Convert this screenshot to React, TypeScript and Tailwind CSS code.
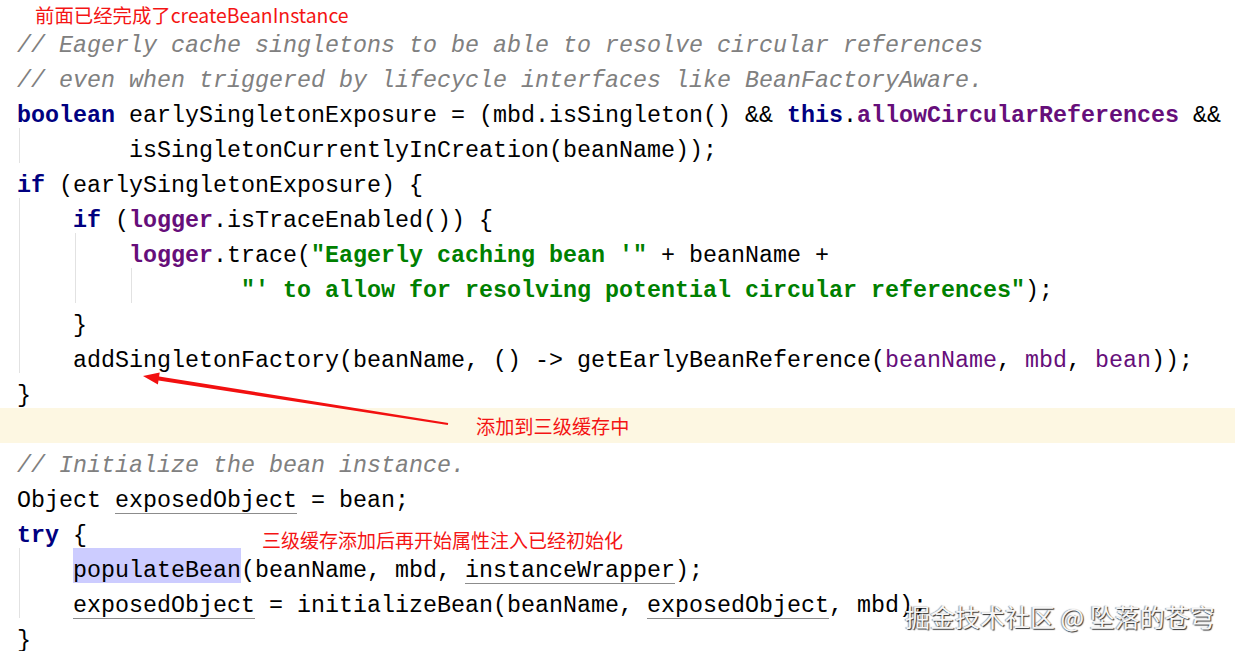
import React from "react";

type Seg = [string, string?];

interface Line {
  segs: Seg[];
  guides?: number[];
  band?: boolean;
}

// token styles, IntelliJ default light scheme
const K = "font-bold text-[#000080]";
const F = "font-bold text-[#660e7a]";
const P = "text-[#660e7a]";
const S = "font-bold text-[#008000]";
const C = "italic text-[#808080]";
const U = "underline decoration-[#8c8c8c] decoration-1 underline-offset-[6px]";

const guideClass: Record<number, string> = {
  20: "left-[19px]",
  75: "left-[75px]",
  131: "left-[131px]",
};

const lines: Line[] = [
  { segs: [["// Eagerly cache singletons to be able to resolve circular references", C]] },
  { segs: [["// even when triggered by lifecycle interfaces like BeanFactoryAware.", C]] },
  {
    segs: [
      ["boolean", K],
      [" earlySingletonExposure = (mbd.isSingleton() && "],
      ["this", K],
      ["."],
      ["allowCircularReferences", F],
      [" &&"],
    ],
  },
  { segs: [["        isSingletonCurrentlyInCreation(beanName));"]], guides: [20] },
  { segs: [["if", K], [" (earlySingletonExposure) {"]] },
  { segs: [["    "], ["if", K], [" ("], ["logger", F], [".isTraceEnabled()) {"]], guides: [20] },
  {
    segs: [["        "], ["logger", F], [".trace("], ['"Eagerly caching bean \'"', S], [" + beanName +"]],
    guides: [20, 75],
  },
  {
    segs: [["                "], ["\"' to allow for resolving potential circular references\"", S], [");"]],
    guides: [20, 75, 131],
  },
  { segs: [["    }"]], guides: [20] },
  {
    segs: [
      ["    addSingletonFactory(beanName, () -> getEarlyBeanReference("],
      ["beanName", P],
      [", "],
      ["mbd", P],
      [", "],
      ["bean", P],
      ["));"],
    ],
    guides: [20],
  },
  { segs: [["}"]] },
  { segs: [], band: true },
  { segs: [["// Initialize the bean instance.", C]] },
  { segs: [["Object "], ["exposedObject", U], [" = bean;"]] },
  { segs: [["try", K], [" {"]] },
  {
    segs: [["    "], ["populateBean", "hl"], ["(beanName, mbd, "], ["instanceWrapper", U], [");"]],
    guides: [20],
  },
  {
    segs: [
      ["    "],
      ["exposedObject", U],
      [" = initializeBean(beanName, "],
      ["exposedObject", U],
      [", mbd);"],
    ],
    guides: [20],
  },
  { segs: [["}"]] },
];

function CodeLine({ line }: { line: Line }) {
  if (line.band) {
    // caret line, with the note written on it
    return (
      <div className="flex h-[35px] items-center bg-[#fdf7e2] pl-[476px] pt-[2px] font-['Noto_Sans_CJK_SC',sans-serif] text-[19.2px] text-[#f41414]">
        添加到三级缓存中
      </div>
    );
  }

  return (
    <div className="relative h-[35px] pl-[17px] pt-[6px] whitespace-pre leading-[35px]">
      {line.guides?.map((g) => (
        <span key={g} className={`absolute top-0 bottom-0 w-px bg-[#e2e2e2] ${guideClass[g]}`} />
      ))}
      {line.segs.map(([text, cls], i) =>
        cls === "hl" ? (
          // identifier under the caret: full-height highlight
          <span key={i} className="inline-block h-[35px] -translate-y-[6px] bg-[#ccccff]">
            <span className="inline-block translate-y-[6px]">{text}</span>
          </span>
        ) : (
          <span key={i} className={cls ?? "text-black"}>
            {text}
          </span>
        )
      )}
    </div>
  );
}

export default function App() {
  return (
    <div className="relative flex h-[651px] w-[1235px] flex-col overflow-hidden bg-white">
      <div className="h-[23px] shrink-0 pl-[35px] pt-[3px] font-['Noto_Sans_CJK_SC',sans-serif] text-[19.4px] leading-[24px] text-[#f41414]">
        前面已经完成了createBeanInstance
      </div>

      {/* code */}
      <div className="flex flex-col font-['Liberation_Mono',monospace] text-[23.33px] text-black">
        {lines.map((line, i) => (
          <CodeLine key={i} line={line} />
        ))}
      </div>

      {/* overlays */}
      <div className="absolute left-[262px] top-[528px] font-['Noto_Sans_CJK_SC',sans-serif] text-[19px] leading-[24px] text-[#f41414]">
        三级缓存添加后再开始属性注入已经初始化
      </div>

      <svg className="pointer-events-none absolute left-0 top-0" width="1235" height="651">
        <polygon
          points="143,376 159.7,372.6 159.1,376.5 448.2,423 447.8,425 158.5,380.5 157.9,384.4"
          fill="#f21010"
        />
      </svg>

      {/* watermark */}
      <div className="absolute left-[905px] top-[601px] font-['Noto_Sans_CJK_SC',sans-serif] text-[25px] leading-[30px] text-[#f6f6f6] [text-shadow:1px_1px_1px_rgba(0,0,0,0.8),-1px_0_1px_rgba(0,0,0,0.4)]">
        掘金技术社区 @ 坠落的苍穹
      </div>
    </div>
  );
}
